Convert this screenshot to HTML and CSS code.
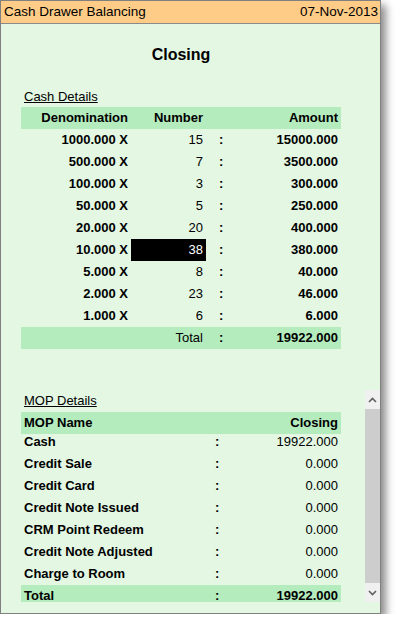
FILE: index.html
```html
<!DOCTYPE html>
<html lang="en">
<head>
    <meta charset="UTF-8">
    <meta name="viewport" content="width=device-width, initial-scale=1.0">
    <title>Cash Drawer Balancing</title>
    <link rel="stylesheet" href="styles.css">
</head>
<body>

<div class="window">
    <div class="titlebar">
        <span>Cash Drawer Balancing</span>
        <span>07-Nov-2013</span>
    </div>

    <div class="content">
        <h2 class="heading">Closing</h2>

        <!-- Detalle de denominaciones -->
        <div class="section-label">Cash Details</div>
        <div class="cash-table">
            <div class="row head">
                <span class="r">Denomination</span>
                <span class="r">Number</span>
                <span></span>
                <span class="r">Amount</span>
            </div>
            <div class="row"><span class="r b">1000.000 X</span><span class="r">15</span><span class="colon">:</span><span class="r b">15000.000</span></div>
            <div class="row"><span class="r b">500.000 X</span><span class="r">7</span><span class="colon">:</span><span class="r b">3500.000</span></div>
            <div class="row"><span class="r b">100.000 X</span><span class="r">3</span><span class="colon">:</span><span class="r b">300.000</span></div>
            <div class="row"><span class="r b">50.000 X</span><span class="r">5</span><span class="colon">:</span><span class="r b">250.000</span></div>
            <div class="row"><span class="r b">20.000 X</span><span class="r">20</span><span class="colon">:</span><span class="r b">400.000</span></div>
            <div class="row"><span class="r b">10.000 X</span><span class="r selected">38</span><span class="colon">:</span><span class="r b">380.000</span></div>
            <div class="row"><span class="r b">5.000 X</span><span class="r">8</span><span class="colon">:</span><span class="r b">40.000</span></div>
            <div class="row"><span class="r b">2.000 X</span><span class="r">23</span><span class="colon">:</span><span class="r b">46.000</span></div>
            <div class="row"><span class="r b">1.000 X</span><span class="r">6</span><span class="colon">:</span><span class="r b">6.000</span></div>
            <div class="row total"><span></span><span class="r">Total</span><span class="colon">:</span><span class="r b">19922.000</span></div>
        </div>

        <!-- Detalle de formas de pago -->
        <div class="mop-scroll">
            <div class="mop-area">
                <div class="section-label">MOP Details</div>
                <div class="mop-table">
                    <div class="mrow head">
                        <span>MOP Name</span>
                        <span></span>
                        <span class="r">Closing</span>
                    </div>
                    <div class="mop-body">
                        <div class="mrow"><span class="b">Cash</span><span class="colon">:</span><span class="r">19922.000</span></div>
                        <div class="mrow"><span class="b">Credit Sale</span><span class="colon">:</span><span class="r">0.000</span></div>
                        <div class="mrow"><span class="b">Credit Card</span><span class="colon">:</span><span class="r">0.000</span></div>
                        <div class="mrow"><span class="b">Credit Note Issued</span><span class="colon">:</span><span class="r">0.000</span></div>
                        <div class="mrow"><span class="b">CRM Point Redeem</span><span class="colon">:</span><span class="r">0.000</span></div>
                        <div class="mrow"><span class="b">Credit Note Adjusted</span><span class="colon">:</span><span class="r">0.000</span></div>
                        <div class="mrow"><span class="b">Charge to Room</span><span class="colon">:</span><span class="r">0.000</span></div>
                        <div class="mrow total"><span class="b">Total</span><span class="colon">:</span><span class="r b">19922.000</span></div>
                    </div>
                </div>
            </div>
            <div class="scrollbar">
                <div class="sb-btn">
                    <svg width="9" height="6" viewBox="0 0 9 6"><polyline points="1,5 4.5,1.5 8,5" fill="none" stroke="#606060" stroke-width="1.6"/></svg>
                </div>
                <div class="sb-track"></div>
                <div class="sb-btn">
                    <svg width="9" height="6" viewBox="0 0 9 6"><polyline points="1,1 4.5,4.5 8,1" fill="none" stroke="#606060" stroke-width="1.6"/></svg>
                </div>
            </div>
        </div>
    </div>
</div>

</body>
</html>
```

FILE: styles.css
```css
body {
    margin: 0;
    padding: 0;
    background-color: #fff;
    font-family: "Liberation Sans", Arial, sans-serif;
    font-size: 13px;
    color: #000;
}

.window {
    width: 379px;
    height: 612px;
    border: 1px solid #808080;
    background-color: #e3f7e3;
    box-shadow: 5px 5px 8px rgba(0, 0, 0, 0.45);
    display: flex;
    flex-direction: column;
}

.titlebar {
    height: 22px;
    line-height: 22px;
    background-color: #ffcc88;
    border-bottom: 1px solid #8a8a8a;
    display: flex;
    justify-content: space-between;
    padding: 0 2px 0 3px;
    font-size: 13.5px;
}

.content {
    flex: 1;
    padding: 0 0 10px 20px;
    display: flex;
    flex-direction: column;
}

.heading {
    margin: 21px 0 0 0;
    width: 320px;
    text-align: center;
    font-size: 16px;
    line-height: 20px;
}

.section-label {
    margin-top: 24px;
    padding-left: 3px;
    line-height: 16px;
    text-decoration: underline;
}

/* Tabla de denominaciones */
.cash-table {
    margin-top: 2px;
    width: 320px;
}

.row {
    display: grid;
    grid-template-columns: 110px 75px 20px 115px;
    height: 22px;
    line-height: 22px;
}

.row span {
    padding-right: 3px;
}

.head {
    background-color: #b4ecbe;
    font-weight: bold;
}

.total {
    background-color: #b4ecbe;
}

.r {
    text-align: right;
}

.b {
    font-weight: bold;
}

.row .colon {
    padding: 0 0 0 13px;
    font-weight: bold;
}

.selected {
    background-color: #000;
    color: #fff;
}

/* Area desplazable de formas de pago */
.mop-scroll {
    margin: 41px 0 0 -20px;
    height: 212px;
    display: flex;
    overflow: hidden;
}

.mop-area {
    flex: 1;
    padding-left: 20px;
}

.mop-area .section-label {
    margin-top: 3px;
}

.mop-table {
    margin-top: 3px;
    width: 320px;
}

.mrow {
    display: grid;
    grid-template-columns: 190px 20px 110px;
    height: 22px;
    line-height: 22px;
}

.mrow span:first-child {
    padding-left: 3px;
}

.mrow .r {
    padding-right: 3px;
}

.mrow .colon {
    padding-left: 4px;
    font-weight: bold;
}

.mop-body {
    margin-top: -3px;
}

.scrollbar {
    width: 15px;
    display: flex;
    flex-direction: column;
}

.sb-btn {
    height: 19px;
    background-color: #f0f0f0;
    display: flex;
    align-items: center;
    justify-content: center;
}

.sb-track {
    flex: 1;
    background-color: #cdcdcd;
}
```
